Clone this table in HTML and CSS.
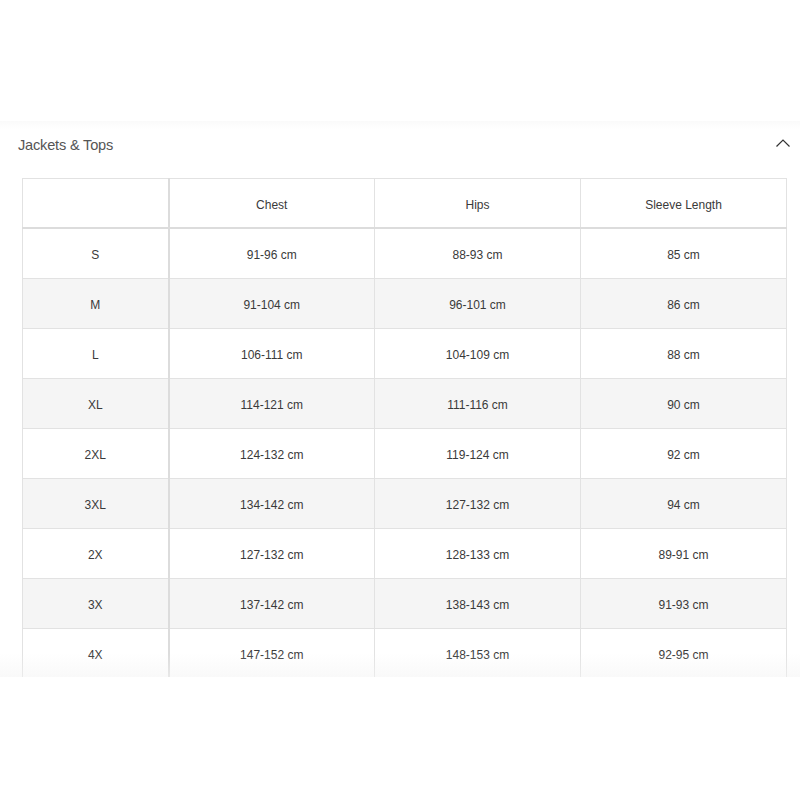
FILE: index.html
```html
<!DOCTYPE html>
<html>
<head>
<meta charset="utf-8">
<link rel="stylesheet" href="styles.css">
</head>
<body>
<div class="top-space"></div>
<section class="panel">
  <div class="panel-head">
    <h2 class="panel-title">Jackets &amp; Tops</h2>
    <svg class="chevron" width="16" height="10" viewBox="0 0 16 10"><polyline points="1.5,8.5 8,2 14.5,8.5" fill="none" stroke="#333" stroke-width="1.2"/></svg>
  </div>
  <div class="table-wrap">
    <table class="size-table">
      <colgroup>
        <col class="c-size"><col class="c-val"><col class="c-val"><col class="c-val">
      </colgroup>
      <thead>
        <tr><th class="first"></th><th>Chest</th><th>Hips</th><th>Sleeve Length</th></tr>
      </thead>
      <tbody>
        <tr><td class="first">S</td><td>91-96 cm</td><td>88-93 cm</td><td>85 cm</td></tr>
        <tr><td class="first">M</td><td>91-104 cm</td><td>96-101 cm</td><td>86 cm</td></tr>
        <tr><td class="first">L</td><td>106-111 cm</td><td>104-109 cm</td><td>88 cm</td></tr>
        <tr><td class="first">XL</td><td>114-121 cm</td><td>111-116 cm</td><td>90 cm</td></tr>
        <tr><td class="first">2XL</td><td>124-132 cm</td><td>119-124 cm</td><td>92 cm</td></tr>
        <tr><td class="first">3XL</td><td>134-142 cm</td><td>127-132 cm</td><td>94 cm</td></tr>
        <tr><td class="first">2X</td><td>127-132 cm</td><td>128-133 cm</td><td>89-91 cm</td></tr>
        <tr><td class="first">3X</td><td>137-142 cm</td><td>138-143 cm</td><td>91-93 cm</td></tr>
        <tr><td class="first">4X</td><td>147-152 cm</td><td>148-153 cm</td><td>92-95 cm</td></tr>
      </tbody>
    </table>
    <div class="fade"></div>
  </div>
</section>
</body>
</html>
```
FILE: styles.css
```css
html, body {
  margin: 0;
  padding: 0;
  background: #fff;
}
body {
  font-family: "Liberation Sans", Arial, sans-serif;
  color: #333;
}
.top-space {
  height: 121px;
}
.panel {
  height: 556px;
  overflow: hidden;
  position: relative;
  background: linear-gradient(to bottom, #fafafa 0, #fff 8px);
}
.panel-head {
  display: flex;
  align-items: center;
  justify-content: space-between;
  height: 47px;
  padding: 0 9px 0 18px;
}
.panel-title {
  margin: 0;
  font-size: 14.6px;
  font-weight: normal;
  color: #555;
  letter-spacing: -0.2px;
}
.chevron {
  display: block;
  margin-top: -4px;
}
.table-wrap {
  padding: 10px 0 0 22px;
}
.size-table {
  border-collapse: collapse;
  table-layout: fixed;
  width: 765px;
  font-size: 12px;
  color: #3a3a3a;
}
.c-size { width: 146px; }
.c-val { width: 206px; }
.size-table th,
.size-table td {
  border: 1px solid #e2e2e2;
  height: 47px;
  padding: 2px 0 0;
  text-align: center;
  font-weight: normal;
}
.size-table th {
  height: 45px;
  padding-top: 3px;
  border-bottom: 2px solid #dcdcdc;
}
.size-table .first {
  border-right: 2px solid #dcdcdc;
}
.size-table tbody tr:nth-child(even) td {
  background: #f5f5f5;
}
.fade {
  position: absolute;
  left: 0;
  right: 0;
  bottom: 0;
  height: 24px;
  background: linear-gradient(to bottom, rgba(240,240,240,0), rgba(243,243,243,0.5));
  pointer-events: none;
}
```
